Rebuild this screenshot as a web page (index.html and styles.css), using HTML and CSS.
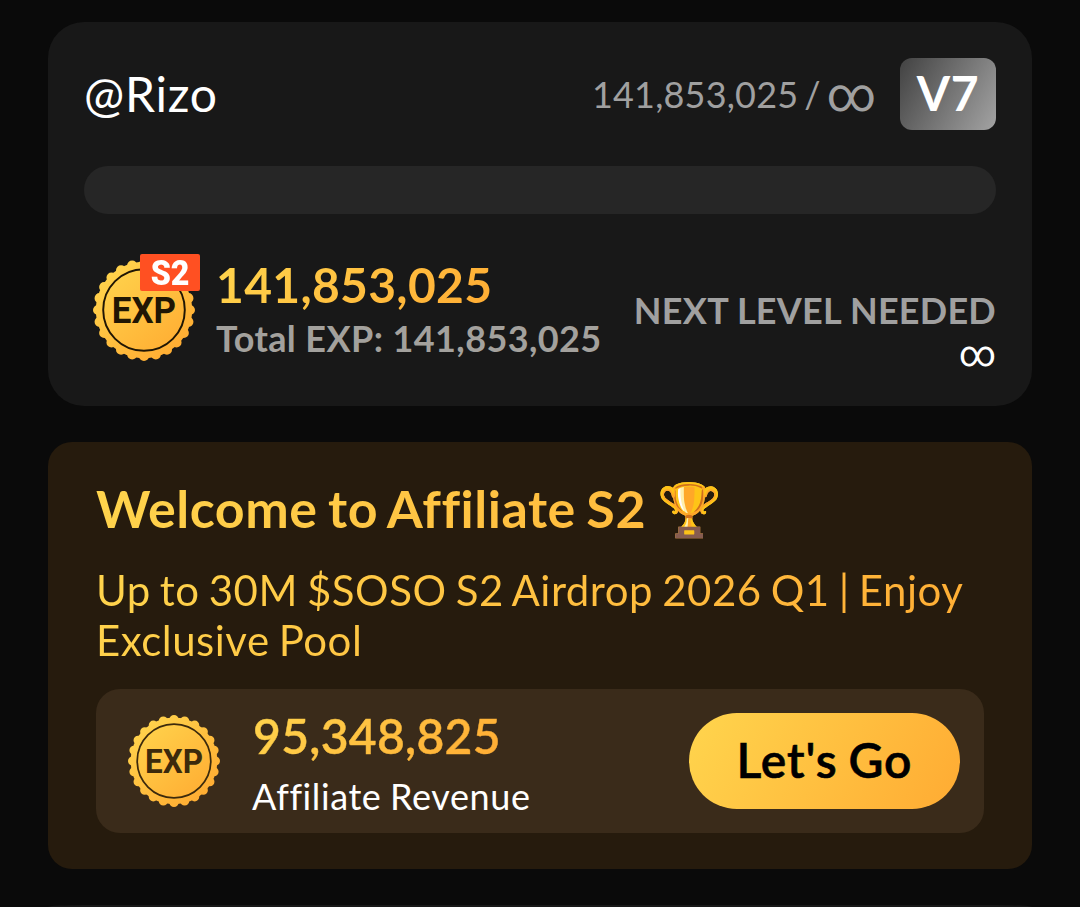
FILE: index.html
```html
<!DOCTYPE html>
<html lang="en">
<head>
<meta charset="UTF-8">
<meta name="viewport" content="width=device-width, initial-scale=1.0">
<title>Affiliate</title>
<link rel="stylesheet" href="styles.css">
</head>
<body>
    <svg class="defs" width="0" height="0">
        <defs>
            <linearGradient id="gold" gradientUnits="userSpaceOnUse" x1="15" y1="10" x2="85" y2="90">
                <stop offset="0" stop-color="#ffd34c"/>
                <stop offset="1" stop-color="#ffac32"/>
            </linearGradient>
            <symbol id="coin" viewBox="0 0 100 100">
                <circle cx="50" cy="50" r="47.2" fill="url(#gold)"/>
                <circle cx="50" cy="50" r="45" fill="none" stroke="url(#gold)" stroke-width="10" stroke-linecap="round" pathLength="240" stroke-dasharray="0 10"/>
                <circle cx="50" cy="50" r="40" fill="none" stroke="currentColor" stroke-width="1.9"/>
                <text class="coin-text" x="50" y="62.6" text-anchor="middle" textLength="63" lengthAdjust="spacingAndGlyphs">EXP</text>
            </symbol>
        </defs>
    </svg>

    <section class="card level">
        <div class="level-head">
            <span class="user">@Rizo</span>
            <div class="progress-text">
                <span class="progress-num">141,853,025</span>
                <span class="slash">/</span>
                <span class="infinity">∞</span>
            </div>
            <span class="badge">V7</span>
        </div>
        <div class="bar"></div>
        <div class="level-foot">
            <div class="coin-wrap">
                <svg class="coin coin-big"><use href="#coin"/></svg>
                <span class="season"><b>S2</b></span>
            </div>
            <div class="exp">
                <span class="exp-num gold">141,853,025</span>
                <span class="exp-total">Total EXP: 141,853,025</span>
            </div>
            <div class="next">
                <span class="next-label">NEXT LEVEL NEEDED</span>
                <span class="next-num">∞</span>
            </div>
        </div>
    </section>

    <section class="card affiliate">
        <h1 class="title gold">Welcome to Affiliate S2 <span class="trophy">🏆</span></h1>
        <p class="desc gold">Up to 30M $SOSO S2 Airdrop 2026 Q1 | Enjoy<br>Exclusive Pool</p>
        <div class="revenue">
            <svg class="coin coin-small"><use href="#coin"/></svg>
            <div class="revenue-text">
                <span class="revenue-num gold">95,348,825</span>
                <span class="revenue-label">Affiliate Revenue</span>
            </div>
            <button class="go">Let's Go</button>
        </div>
    </section>

    <section class="card more"></section>
</body>
</html>
```
FILE: styles.css
```css
* {
    box-sizing: border-box;
}
body {
    margin: 0;
    padding: 22px 48px 0;
    height: 907px;
    overflow: hidden;
    background-color: #0a0a0a;
    color: white;
    font-family: Lato, sans-serif;
    white-space: nowrap;
}
.defs {
    position: absolute;
}
.gold {
    background: linear-gradient(135deg, #ffd54d, #ffab33);
    -webkit-background-clip: text;
    background-clip: text;
    color: transparent;
}
.card {
    border-radius: 36px;
    background-color: #181818;
}

/* level card */
.level {
    height: 384px;
    padding: 36px;
}
.level-head {
    display: flex;
    align-items: center;
    height: 72px;
}
.user {
    font-size: 48px;
    letter-spacing: 0.8px;
    padding-bottom: 1px;
}
.progress-text {
    display: flex;
    align-items: center;
    margin-left: auto;
    margin-right: 24px;
    color: #a0a0a0;
    font-size: 36px;
}
.progress-num {
    letter-spacing: 0.2px;
}
.slash {
    margin: 0 6px;
}
.infinity {
    padding-top: 2px;
    font-family: Roboto, sans-serif;
    font-size: 48px;
    line-height: 48px;
}
.badge {
    width: 96px;
    height: 72px;
    border-radius: 12px;
    background: linear-gradient(120deg, #424242, #a3a3a3);
    font-size: 48px;
    font-weight: bold;
    letter-spacing: 0.7px;
    line-height: 69px;
    text-align: center;
}
.bar {
    height: 48px;
    margin-top: 36px;
    border-radius: 24px;
    background-color: #262626;
}
.level-foot {
    display: flex;
    margin-top: 36px;
}
.coin {
    display: block;
}
.coin-text {
    font: bold 36px Roboto, sans-serif;
    fill: currentColor;
}
.coin-wrap {
    position: relative;
    width: 120px;
    height: 120px;
    padding: 9px;
}
.coin-big {
    width: 102px;
    height: 102px;
    color: #201604;
}
.season {
    position: absolute;
    left: 56px;
    top: 4px;
    width: 60px;
    height: 37px;
    border-radius: 2px;
    background-color: #ff5022;
    font: bold 35px/39px Roboto, sans-serif;
    text-align: center;
}
.season b {
    display: inline-block;
    transform: scaleX(0.92);
}
.exp {
    display: flex;
    flex-direction: column;
    align-items: flex-start;
    padding: 6px 0 0 12px;
}
.exp-num {
    font-size: 48px;
    font-weight: bold;
    letter-spacing: 0.3px;
    line-height: 58px;
}
.exp-total {
    color: #a3a19d;
    font-size: 36px;
    font-weight: bold;
    letter-spacing: 0.4px;
    line-height: 48px;
}
.next {
    display: flex;
    flex-direction: column;
    align-items: flex-end;
    margin-left: auto;
    padding-top: 36px;
}
.next-label {
    color: #a0a0a0;
    font-size: 36px;
    font-weight: bold;
    letter-spacing: 0.25px;
    line-height: 48px;
}
.next-num {
    font: 36px/41px Roboto, sans-serif;
}

/* affiliate card */
.affiliate {
    height: 427px;
    margin-top: 36px;
    padding: 36px 48px;
    border-radius: 24px;
    background-color: #261b0d;
}
.title {
    margin: 0;
    height: 63px;
    font-size: 52px;
    letter-spacing: 0.5px;
    word-spacing: -2.6px;
    line-height: 60px;
}
.trophy {
    color: white;
    font-weight: normal;
}
.desc {
    margin: 24px 0 0;
    font-size: 42px;
    letter-spacing: 0.5px;
    word-spacing: -2.2px;
    line-height: 50px;
}
.revenue {
    display: flex;
    align-items: center;
    height: 144px;
    margin-top: 24px;
    padding: 0 24px 0 32px;
    border-radius: 24px;
    background-color: #3a2b1a;
}
.coin-small {
    width: 92px;
    height: 92px;
    color: #3c2a0c;
}
.revenue-text {
    display: flex;
    flex-direction: column;
    align-items: flex-start;
    margin-left: 32px;
    padding-top: 12px;
}
.revenue-num {
    padding-left: 1px;
    font-size: 48px;
    font-weight: 600;
    letter-spacing: 0.3px;
    line-height: 58px;
    -webkit-text-stroke: 0.5px transparent;
}
.revenue-label {
    font-size: 36px;
    letter-spacing: 0.6px;
    word-spacing: -1.2px;
    line-height: 62px;
}
.go {
    width: 271px;
    height: 96px;
    margin-left: auto;
    padding: 0 0 4px;
    border: none;
    border-radius: 48px;
    background: linear-gradient(120deg, #ffd54d, #ffab33);
    color: black;
    font: 600 48px Lato, sans-serif;
    letter-spacing: 0.9px;
    word-spacing: -2px;
    -webkit-text-stroke: 0.6px black;
}

/* only its top edge is on screen */
.more {
    height: 2px;
    margin-top: 36px;
    border-radius: 36px 36px 0 0 / 2px 2px 0 0;
}
```
